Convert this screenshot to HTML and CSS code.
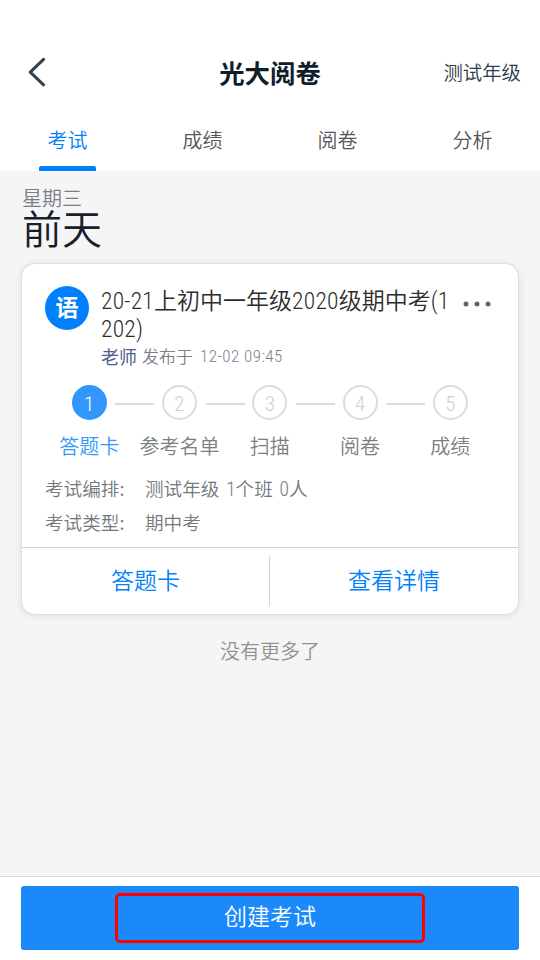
FILE: index.html
```html
<!DOCTYPE html>
<html lang="zh-CN">
<head>
<meta charset="utf-8">
<title>光大阅卷</title>
<link rel="stylesheet" href="styles.css">
</head>
<body>
<header class="header">
  <div class="navbar">
    <svg class="back" width="18" height="30" viewBox="0 0 18 30"><path d="M15.6 2.3 L2.2 15.2 L15.6 27.8" fill="none" stroke="#34414f" stroke-width="3" stroke-linecap="round" stroke-linejoin="round"/></svg>
    <h1 class="title">光大阅卷</h1>
    <span class="grade">测试年级</span>
  </div>
  <nav class="tabs">
    <a class="tab active">考试</a>
    <a class="tab">成绩</a>
    <a class="tab">阅卷</a>
    <a class="tab">分析</a>
  </nav>
</header>
<main class="main">
  <div class="weekday">星期三</div>
  <div class="day">前天</div>
  <section class="card">
    <div class="summary">
      <div class="subject">语</div>
      <div class="heading">
        <div class="exam"><span class="num">20-21</span>上初中一年级<span class="num">2020</span>级期中考<span class="num">(1</span><br><span class="num">202)</span></div>
        <div class="meta"><b>老师</b><span>发布于</span><span class="num time">12-02 09:45</span></div>
      </div>
      <svg class="more" width="30" height="8" viewBox="0 0 30 8" fill="#666"><circle cx="4" cy="4" r="2.5"/><circle cx="15" cy="4" r="2.5"/><circle cx="26" cy="4" r="2.5"/></svg>
    </div>
    <div class="steps">
      <div class="step current"><i class="num">1</i><span>答题卡</span></div>
      <div class="step"><i class="num">2</i><span>参考名单</span></div>
      <div class="step"><i class="num">3</i><span>扫描</span></div>
      <div class="step"><i class="num">4</i><span>阅卷</span></div>
      <div class="step"><i class="num">5</i><span>成绩</span></div>
    </div>
    <div class="info"><span class="label">考试编排:</span><span class="value">测试年级 <span class="num">1</span>个班 <span class="num">0</span>人</span></div>
    <div class="info"><span class="label">考试类型:</span><span class="value">期中考</span></div>
    <div class="actions"><a>答题卡</a><a>查看详情</a></div>
  </section>
  <div class="end">没有更多了</div>
</main>
<footer class="footer">
  <div class="create"><div class="focus">创建考试</div></div>
</footer>
</body>
</html>
```
FILE: styles.css
```css
* { box-sizing: border-box; }
body {
  margin: 0;
  height: 960px;
  display: flex;
  flex-direction: column;
  background: #f5f5f5;
  font-family: "Noto Sans CJK SC", sans-serif;
  font-weight: 350;
  overflow: hidden;
}
.num {
  font-family: Roboto, "Noto Sans CJK SC", sans-serif;
  font-stretch: 80%;
  font-weight: 300;
  font-style: normal;
}
.header { height: 171px; background: #fff; padding-top: 40px; }
.navbar {
  height: 66px;
  padding: 0 19px 0 28px;
  display: grid;
  grid-template-columns: 83px 1fr 92px;
  align-items: center;
}
.title {
  margin: -2px 0 0;
  text-align: center;
  font-size: 25.4px;
  line-height: 30px;
  font-weight: 700;
  color: #101d2b;
}
.grade { margin-top: -2px; text-align: right; font-size: 19.4px; line-height: 30px; color: #2c3a48; }
.back { margin-top: -2px; }
.tabs { display: flex; height: 65px; }
.tab {
  flex: 1;
  display: flex;
  flex-direction: column;
  align-items: center;
  padding-top: 19px;
  font-size: 20px;
  line-height: 30px;
  color: #555;
}
.active { color: #0080fa; }
.active::after {
  content: "";
  width: 57px;
  height: 5px;
  margin-top: 11px;
  border-radius: 2px 2px 0 0;
  background: #0080fa;
}
.main { flex: 1; padding: 13px 22px 0; }
.weekday { font-size: 20px; line-height: 28px; color: #797e83; }
.day { height: 36px; font-size: 40px; line-height: 31px; color: #17202a; }
.card {
  height: 350px;
  margin: 16px 0 0 0;
  border-radius: 13px;
  background: #fff;
  box-shadow: 0 0 0 1px #dedede, 0 1px 8px rgba(0, 0, 0, 0.12);
}
.summary { display: flex; height: 121px; padding: 22px 26px 0 23px; }
.subject {
  flex: none;
  width: 44px;
  height: 44px;
  border-radius: 50%;
  background: #0080fa;
  color: #fff;
  font-size: 23px;
  font-weight: 700;
  line-height: 40px;
  text-align: center;
}
.heading { flex: 1; min-width: 0; padding-left: 12px; white-space: nowrap; }
.exam { height: 56px; font-size: 23px; line-height: 28px; color: #2c2c2c; margin-top: -1px; }
.exam .num { font-size: 23.5px; line-height: 0; letter-spacing: 0.25px; font-weight: 350; }
.meta { display: flex; font-size: 17px; line-height: 30px; color: #7b8087; }
.meta b { font-size: 18px; font-weight: 400; color: #4b6188; margin-right: 5px; }
.meta .time { margin-left: 7px; letter-spacing: 0.45px; }
.more { flex: none; margin-top: 14px; }
.steps { display: grid; grid-template-columns: repeat(5, 90.3px); padding-left: 22px; }
.step { position: relative; display: flex; flex-direction: column; align-items: center; color: #7b8082; }
.step i {
  width: 35px;
  height: 35px;
  border: 2px solid #dcdcdc;
  border-radius: 50%;
  font-size: 21px;
  line-height: 34px;
  text-align: center;
  color: #d0d0d0;
}
.step span { margin-top: 11px; font-size: 20px; line-height: 30px; }
.step + .step::before {
  content: "";
  position: absolute;
  left: -19px;
  top: 18px;
  width: 39px;
  height: 2px;
  background: #dcdcdc;
}
.current { color: #3296fa; }
.step.current i { background: #3296fa; border-color: #3296fa; color: #fff; }
.info { display: flex; height: 34px; padding-left: 23px; font-size: 18.6px; line-height: 34px; color: #73787c; }
.info .num { line-height: 0; font-size: 19.5px; }
.value { word-spacing: 2.6px; }
.steps + .info { margin-top: 10px; }
.label { width: 100px; }
.actions {
  display: grid;
  grid-template-columns: 1fr 1fr;
  height: 66px;
  margin-top: 8px;
  padding-top: 8px;
  border-top: 1px solid #d4d4d4;
}
.actions a { height: 50px; text-align: center; font-size: 23px; line-height: 46px; color: #0080fa; }
.actions a:first-child { border-right: 1px solid #d4d4d4; }
.end { margin-top: 22px; text-align: center; font-size: 20px; line-height: 30px; color: #929292; }
.footer { height: 84px; padding: 9px 21px 0; border-top: 1px solid #dadada; background: #fff; }
.create { height: 64px; padding: 7px 94px; border-radius: 3px; background: #1b89fa; }
.focus {
  height: 50px;
  border: 3px solid #f00;
  border-radius: 5px;
  text-align: center;
  font-size: 23px;
  line-height: 39px;
  color: #fff;
}
```
